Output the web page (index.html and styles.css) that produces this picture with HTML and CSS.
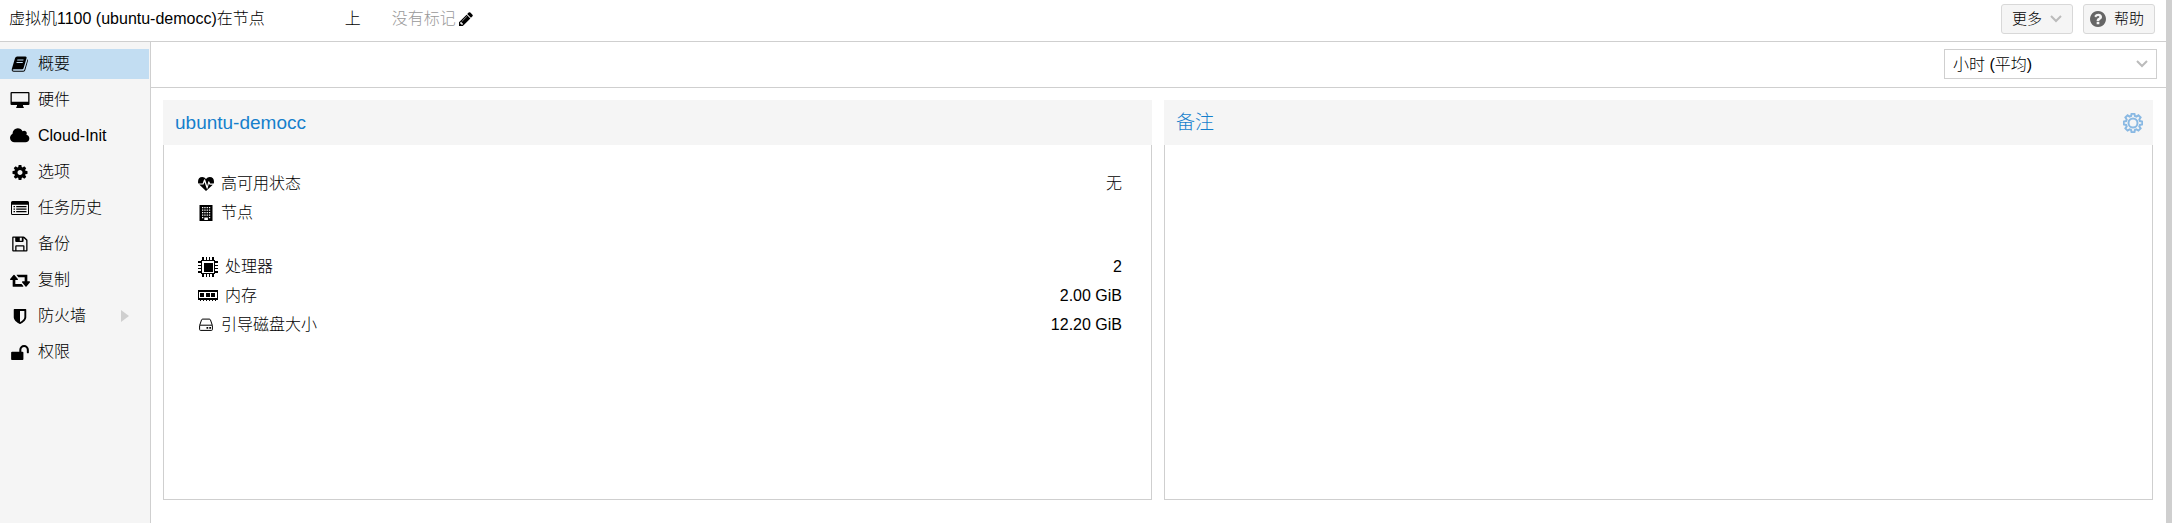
FILE: index.html
```html
<!DOCTYPE html>
<html lang="zh-CN">
<head>
    <meta charset="UTF-8">
    <meta name="viewport" content="width=device-width, initial-scale=1.0">
    <title>ubuntu-democc</title>
    <link rel="stylesheet" href="styles.css">
</head>
<body>
    <header class="topbar">
        <div class="vm-title">虚拟机1100 (ubuntu-democc)在节点</div>
        <div class="vm-on">上</div>
        <div class="tags">
            <span>没有标记</span>
            <button type="button" class="edit-tags" aria-label="编辑标记">
                <svg viewBox="128 128 1536 1536" width="14" height="14"><path d="M491 1536l91-91-235-235-91 91v107h128v128h107zm523-928q0-22-22-22-10 0-17 7l-542 542q-7 7-7 17 0 22 22 22 10 0 17-7l542-542q7-7 7-17zm-54-192l416 416-832 832h-416v-416zm683 96q0 53-37 90l-166 166-416-416 166-165q36-38 90-38 53 0 91 38l235 234q37 39 37 91z"/></svg>
            </button>
        </div>
        <div class="actions">
            <button type="button" class="btn">更多
                <svg class="chevron" viewBox="0 0 12 8" width="12" height="8"><path d="M1 1l5 5 5-5"/></svg>
            </button>
            <button type="button" class="btn">
                <svg class="help-icon" viewBox="128 128 1536 1536" width="16" height="16"><path d="M1024 1376v-192q0-14-9-23t-23-9h-192q-14 0-23 9t-9 23v192q0 14 9 23t23 9h192q14 0 23-9t9-23zm256-672q0-88-55.500-163t-138.500-116-170-41q-243 0-371 213-15 24 8 42l132 100q7 6 19 6 16 0 25-12 53-68 86-92 34-24 86-24 48 0 85.500 26t37.500 59q0 38-20 61t-68 45q-63 28-115.500 86.500t-52.500 125.500v36q0 14 9 23t23 9h192q14 0 23-9t9-23q0-19 21.500-49.500t54.500-49.500q32-18 49-28.500t46-35 44.500-48 28-60.500 12.500-81zm384 192q0 209-103 385.500t-279.500 279.500-385.500 103-385.500-103-279.500-279.500-103-385.500 103-385.500 279.500-279.500 385.500-103 385.500 103 279.500 279.500 103 385.500z"/></svg>
                帮助
            </button>
        </div>
    </header>

    <div class="layout">
        <nav class="sidebar">
            <a href="#summary" class="nav-item active">
                <svg viewBox="0 0 20 16" width="20" height="16"><path fill-rule="evenodd" d="M7.200.5h8.300q1.500.2 1.100 1.600L13.600 12q-.3 1.300-1.500 1.300H4q-1.500 0-1.500.7 0 .7 1.500.7h9.300q.8 0 1.100-.9L17.600 3.200q.7.300.4 1.400L15.300 14q-.4 1.700-2 1.700H3.800Q1.300 15.600 1.800 13L5 2.200Q5.500.6 7.200.5zM7.400 3.500l-.3 1h6.200l.3-1zM6.700 6l-.3 1h6.200l.3-1z"/></svg>
                概要
            </a>
            <a href="#hardware" class="nav-item">
                <svg viewBox="0 0 20 16" width="20" height="16"><path fill-rule="evenodd" d="M1.500 0h17q1 0 1 1v11q0 1-1 1H13q-.4 1 .8 2.200V16H6.200v-.8Q7.400 14 7 13H1.500q-1 0-1-1V1q0-1 1-1zm.3 1.200v8.600h16.400V1.200z"/></svg>
                硬件
            </a>
            <a href="#cloudinit" class="nav-item">
                <svg viewBox="64 140 1984 1536" width="20" height="16"><path d="M1984 1152q0 159-112.500 271.500t-271.500 112.500h-1088q-185 0-316.500-131.500t-131.500-316.500q0-132 71-241.500t187-163.500q-2-28-2-43 0-212 150-362t362-150q158 0 286.500 88t187.500 230q70-62 166-62 106 0 181 75t75 181q0 75-41 138 129 30 213 134.500t84 239.500z"/></svg>
                Cloud-Init
            </a>
            <a href="#options" class="nav-item">
                <svg viewBox="128 128 1536 1536" width="20" height="15"><path d="M1152 896q0-106-75-181t-181-75-181 75-75 181 75 181 181 75 181-75 75-181zm512-109v222q0 12-8 23t-20 13l-185 28q-19 54-39 91 35 50 107 138 10 12 10 25t-9 23q-27 37-99 108t-94 71q-12 0-26-9l-138-108q-44 23-91 38-16 136-29 186-7 28-36 28h-222q-14 0-24.500-8.500t-11.500-21.500l-28-184q-49-16-90-37l-141 107q-10 9-25 9-14 0-25-11-126-114-165-168-7-10-7-23 0-12 8-23 15-21 51-66.500t54-70.500q-27-50-41-99l-183-27q-13-2-21-12.500t-8-23.500v-222q0-12 8-23t19-13l186-28q14-46 39-92-40-57-107-138-10-12-10-24 0-10 9-23 26-36 98.500-107.500t94.500-71.500q13 0 26 10l138 107q44-23 91-38 16-136 29-186 7-28 36-28h222q14 0 24.500 8.500t11.500 21.500l28 184q49 16 90 37l142-107q9-9 24-9 13 0 25 10 129 119 165 170 7 8 7 22 0 12-8 23-15 21-51 66.500t-54 70.500q26 50 41 98l183 28q13 2 21 12.500t8 23.500z"/></svg>
                选项
            </a>
            <a href="#tasks" class="nav-item">
                <svg viewBox="0 0 20 16" width="20" height="16"><path fill-rule="evenodd" d="M2.500 1h15q1.500 0 1.500 1.500v11q0 1.500-1.500 1.500h-15Q1 15 1 13.500v-11Q1 1 2.500 1zM2 4.800v8.700q0 .5.500.5h15q.5 0 .5-.5V4.800z"/><path d="M3.500 6H5v1.200H3.500zM6.200 6h10.300v1.200H6.200zM3.500 8.500H5v1.200H3.500zM6.200 8.500h10.300v1.200H6.200zM3.500 11H5v1.200H3.500zM6.200 11h10.300v1.200H6.200z"/></svg>
                任务历史
            </a>
            <a href="#backup" class="nav-item">
                <svg viewBox="0 0 20 16" width="20" height="16"><path fill-rule="evenodd" d="M3 .500h10.500q.7 0 1.200.5L17 3.300q.5.500.5 1.200v10q0 1-1 1H3.200q-1 0-1-1v-13q0-1 .8-1zM3.500 1.800v12.400h1.700v-4q0-1 1-1h7.300q1 0 1 1v4h1.700V4.500L13.600 1.900V5q0 1-1 1H6.200q-1 0-1-1V1.800zm6.300 0v3h2v-3zm-3.300 8.700v3.700h6.700v-3.700z"/></svg>
                备份
            </a>
            <a href="#replication" class="nav-item">
                <svg viewBox="64 128 1920 1536" width="20" height="16"><path d="M1344 1504q0 13-9.500 22.500t-22.500 9.500h-960q-8 0-13.500-2t-9-7-5.500-8-3-11.500-1-11.500v-600h-192q-26 0-45-19t-19-45q0-24 15-41l320-384q19-22 49-22t49 22l320 384q15 17 15 41 0 26-19 45t-45 19h-192v384h576q16 0 25 11l160 192q7 10 7 21zm640-416q0 24-15 41l-320 384q-20 23-49 23t-49-23l-320-384q-15-17-15-41 0-26 19-45t45-19h192v-384h-576q-16 0-25-12l-160-192q-7-9-7-20 0-13 9.500-22.500t22.500-9.500h960q8 0 13.500 2t9 7 5.500 8 3 11.500 1 11.500v600h192q26 0 45 19t19 45z"/></svg>
                复制
            </a>
            <a href="#firewall" class="nav-item">
                <svg viewBox="128 128 1536 1536" width="20" height="15"><path d="M1344 960v-640h-448v1137q119-63 213-137 235-184 235-360zm192-768v768q0 86-33.500 170.500t-83 150-118 127.500-126.500 103-121 77.500-89.500 49.500-42.500 20q-12 6-26 6t-26-6q-16-7-42.500-20t-89.500-49.500-121-77.500-126.500-103-118-127.500-83-150-33.500-170.500v-768q0-26 19-45t45-19h1152q26 0 45 19t19 45z"/></svg>
                防火墙
                <svg class="expander" viewBox="0 0 8 12" width="8" height="12"><path d="M0 0l8 6-8 6z"/></svg>
            </a>
            <a href="#permissions" class="nav-item">
                <svg viewBox="64 128 1664 1408" width="20" height="15"><path d="M1728 576v256q0 26-19 45t-45 19h-64q-26 0-45-19t-19-45v-256q0-106-75-181t-181-75-181 75-75 181v192h96q40 0 68 28t28 68v576q0 40-28 68t-68 28h-960q-40 0-68-28t-28-68v-576q0-40 28-68t68-28h672v-192q0-185 131.500-316.500t316.500-131.500 316.500 131.500 131.500 316.500z"/></svg>
                权限
            </a>
        </nav>

        <main class="content">
            <div class="toolbar">
                <div class="combo">
                    <select aria-label="时间范围">
                        <option>小时 (平均)</option>
                    </select>
                    <svg class="chevron" viewBox="0 0 12 8" width="12" height="8"><path d="M1 1l5 5 5-5"/></svg>
                </div>
            </div>
            <div class="panels">
                <section class="panel">
                    <h2 class="panel-header">ubuntu-democc</h2>
                    <dl class="panel-body">
                        <div class="info-row">
                            <dt>
                                <svg viewBox="0 0 16 14" width="16" height="14"><path d="M0 5Q0 0 4.300 0 6.500 0 8 2 9.500 0 11.700 0 16 0 16 5q0 .7-.3 1.500h-3.500l-1-2.100q-.5-.6-.9.200L9.200 9 7.100 2.600q-.5-.7-1 0L4.600 6.500H.3Q0 5.700 0 5zM1.200 7.600h3.900q.4 0 .5-.4l.9-2.200 2.200 6.400q.5.700.9 0l1.300-5 .6 1q.2.300.5.300h2.800L8 14z"/></svg>
                                高可用状态
                            </dt>
                            <dd>无</dd>
                        </div>
                        <div class="info-row">
                            <dt>
                                <svg viewBox="0 0 16 16" width="16" height="16"><path fill-rule="evenodd" d="M1.500 0h13v16h-13zM4 2v1.200h1.300V2zm2.300 0v1.200h1.300V2zm2.300 0v1.200h1.300V2zm2.300 0v1.200h1.300V2zM4 4.500v1.200h1.300V4.500zm2.300 0v1.200h1.300V4.500zm2.300 0v1.200h1.300V4.500zm2.300 0v1.200h1.300V4.500zM4 7v1.200h1.300V7zm2.300 0v1.200h1.300V7zm2.300 0v1.200h1.300V7zm2.300 0v1.200h1.300V7zM4 9.500v1.200h1.300V9.500zm2.300 0v1.200h1.300V9.500zm2.300 0v1.200h1.300V9.500zm2.300 0v1.200h1.300V9.500zM4 12v1.200h1.300V12zm6.900 0v1.200h1.300V12zM6.300 12.500V15h3.600v-2.500z"/></svg>
                                节点
                            </dt>
                            <dd></dd>
                        </div>
                        <div class="info-row group-start">
                            <dt>
                                <svg viewBox="0 0 20 20" width="20" height="20" shape-rendering="crispEdges"><path fill-rule="evenodd" d="M3 3h14v14H3zm1 1v12h12V4z"/><path d="M6 6h9v9H6zM4 0h2v3H4zM8 0h1v3H8zM11 0h1v3h-1zM14 0h2v3h-2zM4 17h2v3H4zM8 17h1v3H8zM11 17h1v3h-1zM14 17h2v3h-2zM0 4h3v2H0zM0 8h3v1H0zM0 11h3v1H0zM0 14h3v2H0zM17 4h3v2h-3zM17 8h3v1h-3zM17 11h3v1h-3zM17 14h3v2h-3z"/></svg>
                                处理器
                            </dt>
                            <dd>2</dd>
                        </div>
                        <div class="info-row">
                            <dt>
                                <svg viewBox="0 0 20 11" width="20" height="11" shape-rendering="crispEdges"><path fill-rule="evenodd" d="M0 0h20v10H0zM1 2v6h18V2z"/><path d="M2 3h4v4H2zM8 3h4v4H8zM13 3h4v4h-4zM2 10h1v1H2zM5 10h1v1H5zM8 10h1v1H8zM11 10h1v1h-1zM14 10h1v1h-1zM17 10h1v1h-1z"/></svg>
                                内存
                            </dt>
                            <dd>2.00 GiB</dd>
                        </div>
                        <div class="info-row">
                            <dt>
                                <svg viewBox="0 0 16 14" width="16" height="14"><path class="line" d="M1.600 7.500L3.500 2q.3-.9 1.200-.9h6.600q.9 0 1.200.9l1.900 5.500v4q0 .9-.9.900h-11q-.9 0-.9-.900zM2 7.200h12"/><path d="M8.500 9h1.700v1.700H8.500zM11.300 9H13v1.700h-1.700z"/></svg>
                                引导磁盘大小
                            </dt>
                            <dd>12.20 GiB</dd>
                        </div>
                    </dl>
                </section>
                <section class="panel">
                    <h2 class="panel-header">备注
                        <button type="button" class="gear" aria-label="编辑备注">
                            <svg viewBox="0 0 20 20" width="20" height="20"><path d="M8.600.7h2.800l.5 2.300 1.500.6 2-1.300 2.200 2.200-1.300 2 .6 1.600 2.400.5v2.800l-2.400.5-.6 1.500 1.300 2-2.200 2.200-2-1.200-1.500.6-.5 2.300H8.600L8.100 17l-1.500-.6-2 1.200-2.200-2.200 1.300-2-.6-1.500-2.400-.5V8.600l2.400-.5.6-1.600-1.300-2 2.200-2.200 2 1.300L8.100 3z"/><circle cx="10" cy="10" r="4.500"/></svg>
                        </button>
                    </h2>
                    <div class="panel-body"></div>
                </section>
            </div>
        </main>
    </div>
</body>
</html>
```
FILE: styles.css
```css
* {
    box-sizing: border-box;
}
body {
    margin: 0;
    min-height: 100vh;
    display: flex;
    flex-direction: column;
    border-right: 6px solid #cfcfcf;
    background-color: #fff;
    color: #000;
    font-family: "Liberation Sans", "Noto Sans CJK SC", sans-serif;
    font-size: 16px;
    font-weight: 300;
    line-height: 20px;
}
button,
select {
    font: inherit;
    color: inherit;
}
svg {
    flex: none;
    display: block;
}
.topbar {
    display: flex;
    align-items: center;
    height: 42px;
    padding: 0 11px 4px 9px;
    border-bottom: 1px solid #cfcfcf;
}
.vm-on {
    margin-left: 80px;
}
.tags {
    display: flex;
    align-items: center;
    gap: 3px;
    margin-left: 31px;
    color: #999;
}
.edit-tags {
    padding: 0;
    border: none;
    background: none;
    cursor: pointer;
}
.actions {
    display: flex;
    gap: 10px;
    margin-left: auto;
}
.btn {
    display: flex;
    align-items: center;
    justify-content: space-between;
    width: 72px;
    height: 30px;
    padding: 0 10px;
    border: 1px solid #d8d8d8;
    border-radius: 3px;
    background-color: #f5f5f5;
    font-size: 15px;
    cursor: pointer;
}
.btn:last-child {
    padding-left: 6px;
}
.help-icon {
    fill: #666;
}
.chevron {
    fill: none;
    stroke: #bbb;
    stroke-width: 2;
}
.layout {
    flex: 1;
    display: flex;
}
.sidebar {
    width: 151px;
    padding: 7px 1px 0 0;
    display: flex;
    flex-direction: column;
    gap: 6px;
    border-right: 1px solid #cfcfcf;
    background-color: #f5f5f5;
}
.nav-item {
    display: flex;
    align-items: center;
    gap: 8px;
    height: 30px;
    padding: 0 20px 0 10px;
    color: #000;
    text-decoration: none;
}
.nav-item.active {
    background-color: #c2ddf2;
}
.expander {
    margin-left: auto;
    fill: #cfcfcf;
}
.content {
    flex: 1;
    display: flex;
    flex-direction: column;
}
.toolbar {
    display: flex;
    justify-content: flex-end;
    padding: 7px 9px 8px;
    border-bottom: 1px solid #cfcfcf;
}
.combo {
    position: relative;
    width: 213px;
}
.combo select {
    display: block;
    width: 100%;
    height: 30px;
    padding: 2px 8px 0;
    border: 1px solid #cfcfcf;
    border-radius: 0;
    background-color: #fff;
    appearance: none;
}
.combo .chevron {
    position: absolute;
    right: 9px;
    top: 11px;
    pointer-events: none;
}
.panels {
    flex: 1;
    display: grid;
    grid-template-columns: 1fr 1fr;
    gap: 12px;
    padding: 12px 13px 23px 12px;
}
.panel {
    display: flex;
    flex-direction: column;
}
.panel-header {
    display: flex;
    align-items: center;
    justify-content: space-between;
    height: 45px;
    margin: 0;
    padding: 0 10px 0 12px;
    background-color: #f5f5f5;
    color: #157fcc;
    font-size: 19px;
    font-weight: 300;
}
.gear {
    padding: 0;
    border: none;
    background: none;
    cursor: pointer;
}
.gear svg {
    fill: none;
    stroke: #8ab9e3;
    stroke-width: 2;
}
.panel-body {
    flex: 1;
    margin: 0;
    padding: 24px 29px 0 34px;
    border: 1px solid #cfcfcf;
    border-top: none;
}
.info-row {
    display: flex;
    align-items: center;
    justify-content: space-between;
    height: 29px;
}
.info-row.group-start {
    margin-top: 25px;
}
.info-row dt {
    display: flex;
    align-items: center;
    gap: 7px;
}
.info-row dd {
    margin: 0;
}
.line {
    fill: none;
    stroke: #000;
    stroke-width: 1;
}
```
